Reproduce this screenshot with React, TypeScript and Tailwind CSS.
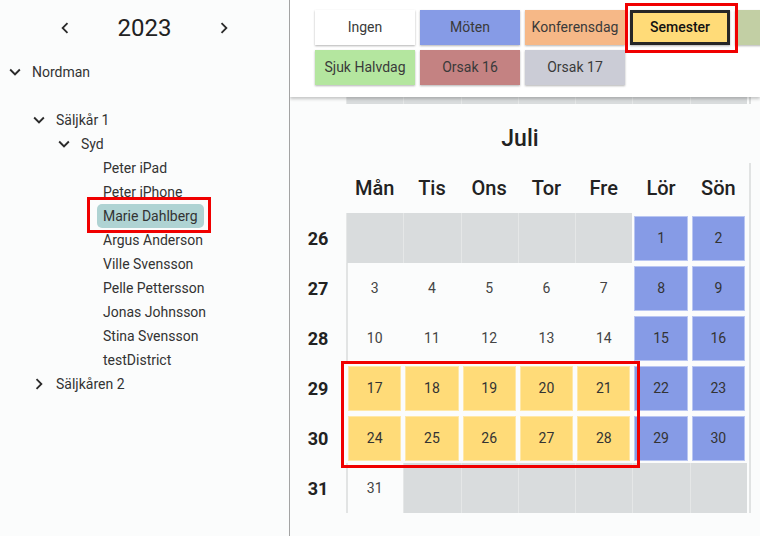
import React from 'react';

type Kind = 'out' | 'plain' | 'weekend' | 'vacation';

const vacation = new Set([17, 18, 19, 20, 21, 24, 25, 26, 27, 28]);

// Juli 2023 börjar på en lördag
const weeks = [26, 27, 28, 29, 30, 31].map((nr, w) => ({
  nr,
  days: Array.from({ length: 7 }, (_, i) => {
    const d = w * 7 + i - 4;
    if (d < 1 || d > 31) return { d: 0, k: 'out' as Kind };
    if (i >= 5) return { d, k: 'weekend' as Kind };
    if (vacation.has(d)) return { d, k: 'vacation' as Kind };
    return { d, k: 'plain' as Kind };
  }),
}));

const weekdays = ['Mån', 'Tis', 'Ons', 'Tor', 'Fre', 'Lör', 'Sön'];

const reasons = [
  { label: 'Ingen', cls: 'bg-white' },
  { label: 'Möten', cls: 'bg-[#869be6]' },
  { label: 'Konferensdag', cls: 'bg-[#f6b887]' },
  { label: 'Semester', cls: 'bg-[#ffdb78]', active: true },
  { label: '', cls: 'bg-[#c2cfa4]' },
  { label: 'Sjuk Halvdag', cls: 'bg-[#b4e69f]' },
  { label: 'Orsak 16', cls: 'bg-[#c48282]' },
  { label: 'Orsak 17', cls: 'bg-[#cbccd6]' },
];

const people = [
  'Peter iPad',
  'Peter iPhone',
  'Marie Dahlberg',
  'Argus Anderson',
  'Ville Svensson',
  'Pelle Pettersson',
  'Jonas Johnsson',
  'Stina Svensson',
  'testDistrict',
];

const ExpandMore = () => (
  <svg width="22" height="22" viewBox="0 0 24 24" fill="#2b2b2b">
    <path d="M16.59 8.59 12 13.17 7.41 8.59 6 10l6 6 6-6z" />
  </svg>
);

const ChevronRight = () => (
  <svg width="22" height="22" viewBox="0 0 24 24" fill="#2b2b2b">
    <path d="M10 6 8.59 7.41 13.17 12l-4.58 4.59L10 18l6-6z" />
  </svg>
);

const ChevronLeft = () => (
  <svg width="22" height="22" viewBox="0 0 24 24" fill="#2b2b2b">
    <path d="M15.41 7.41 14 6l-6 6 6 6 1.41-1.41L10.83 12z" />
  </svg>
);

function DayCell({ d, k, first }: { d: number; k: Kind; first: boolean }) {
  if (k === 'out') {
    return <div className="h-[50px] bg-[#d9dcdd] shadow-[inset_1px_0_0_#e5e7e7]" />;
  }
  if (k === 'plain') {
    return (
      <div
        className={`h-[50px] flex items-center justify-center text-[14px] text-[#444] ${
          first ? 'shadow-[inset_2px_0_0_#e2e4e4]' : ''
        }`}
      >
        {d}
      </div>
    );
  }
  const color =
    k === 'weekend' ? 'bg-[#869be6] border-[#b9c6f2]' : 'bg-[#ffdb78] border-[#ffe8a8]';
  return (
    <div className="h-[50px] px-[2px] pt-[3px] pb-[2px]">
      <div className={`h-full border flex items-center justify-center text-[14px] text-[#333] ${color}`}>
        {d}
      </div>
    </div>
  );
}

function Sidebar() {
  return (
    <aside className="w-[290px] shrink-0 h-full border-r border-[#a3a3a3] bg-[#fbfcfc] text-[#333]">
      <div className="h-14 flex items-center justify-center gap-[42px]">
        <ChevronLeft />
        <span className="text-[24px] text-[#222]">2023</span>
        <ChevronRight />
      </div>
      <div className="mt-1 text-[14px]">
        <div className="h-6 flex items-center pl-[4px] gap-[6px]">
          <ExpandMore />
          <span>Nordman</span>
        </div>
        <div className="h-6" />
        <div className="h-6 flex items-center pl-[28px] gap-[6px]">
          <ExpandMore />
          <span>Säljkår 1</span>
        </div>
        <div className="h-6 flex items-center pl-[53px] gap-[6px]">
          <ExpandMore />
          <span>Syd</span>
        </div>
        {people.map((p) => (
          <div key={p} className="h-6 flex items-center pl-[97px]">
            <span
              className={`px-[6px] h-6 flex items-center rounded-[5px] ${
                p === 'Marie Dahlberg' ? 'bg-[#afd3d3]' : ''
              }`}
            >
              {p}
            </span>
          </div>
        ))}
        <div className="h-6 flex items-center pl-[28px] gap-[6px]">
          <ChevronRight />
          <span>Säljkåren 2</span>
        </div>
      </div>
    </aside>
  );
}

function Toolbar() {
  return (
    <div className="relative z-10 bg-white pl-[25px] pt-[10px] pb-[12px] shadow-[0_2px_3px_rgba(0,0,0,0.22)]">
      <div className="w-[530px] shrink-0 flex flex-wrap gap-[5px]">
        {reasons.map((r, i) => (
          <div
            key={i}
            className={`w-[100px] h-[35px] flex items-center justify-center text-[14px] shadow-[0_1px_2px_rgba(0,0,0,0.3)] ${r.cls} ${
              r.active ? 'border-[3px] border-[#262626] text-[#111] font-medium' : 'text-[#3a3a3a]'
            }`}
          >
            {r.label}
          </div>
        ))}
      </div>
    </div>
  );
}

function Calendar() {
  return (
    <div className="flex-1 bg-[#fbfcfc] text-[#222]">
      {/* sista raden från juni, bortscrollad under verktygsfältet */}
      <div className="w-[461px] pr-[2px] border-r-2 border-[#dcdede] grid grid-cols-[56px_repeat(7,1fr)]">
        <div />
        {weekdays.map((w) => (
          <div key={w} className="h-[7px] bg-[#d9dcdd] shadow-[inset_1px_0_0_#e5e7e7]" />
        ))}
      </div>
      <div className="w-[460px] text-center text-[23px] font-medium leading-[30px] pt-[20px] pb-[9px]">
        Juli
      </div>
      <div className="w-[461px] pr-[2px] border-r-2 border-[#e1e3e3]">
        <div className="grid grid-cols-[56px_repeat(7,1fr)]">
          <div />
          {weekdays.map((w) => (
            <div key={w} className="h-[50px] flex items-center justify-center text-[20px] font-medium">
              {w}
            </div>
          ))}
        </div>
        {weeks.map((wk) => (
          <div key={wk.nr} className="grid grid-cols-[56px_repeat(7,1fr)]">
            <div className="h-[50px] flex items-center justify-center text-[18px] font-bold">{wk.nr}</div>
            {wk.days.map((day, i) => (
              <DayCell key={i} d={day.d} k={day.k} first={i === 0} />
            ))}
          </div>
        ))}
      </div>
    </div>
  );
}

export default function App() {
  return (
    <div className="relative w-[760px] h-[536px] overflow-hidden flex font-['Roboto',sans-serif] bg-[#fbfcfc]">
      <Sidebar />
      <main className="flex-1 min-w-0 h-full flex flex-col overflow-hidden">
        <Toolbar />
        <Calendar />
      </main>

      {/* röda markeringar */}
      <div className="absolute left-[87px] top-[197px] w-[124px] h-[36px] border-[3px] border-[#f00000] pointer-events-none" />
      <div className="absolute left-[625px] top-[3px] w-[113px] h-[50px] border-[3px] border-[#f00000] pointer-events-none z-20" />
      <div className="absolute left-[341px] top-[361px] w-[299px] h-[107px] border-[3px] border-[#f00000] pointer-events-none" />
    </div>
  );
}
